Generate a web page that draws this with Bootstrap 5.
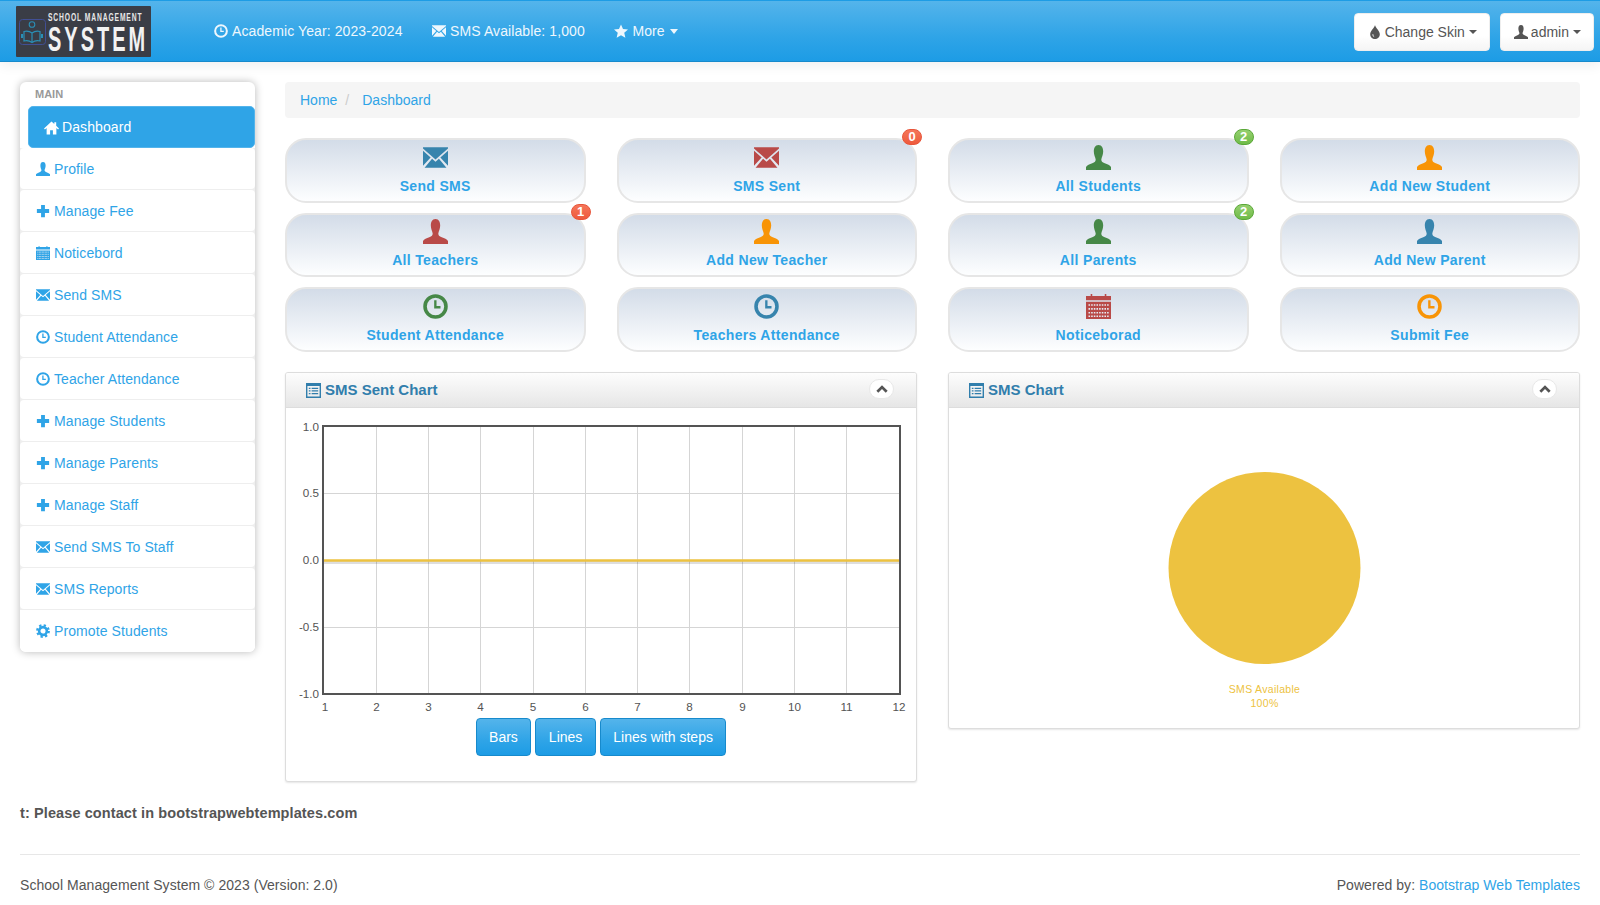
<!DOCTYPE html>
<html lang="en">
<head>
<meta charset="utf-8">
<title>School Management System</title>
<link href="https://cdn.jsdelivr.net/npm/bootstrap@5.3.0/dist/css/bootstrap.min.css" rel="stylesheet">
<style>
body{font-family:"Liberation Sans",Arial,sans-serif;font-size:14px;line-height:20px;letter-spacing:.1px;color:#555;background:#fff;height:905px;overflow:hidden}
a{text-decoration:none;color:#2fa4e7}
.ico{display:inline-block;width:14px;height:14px;fill:currentColor;vertical-align:-1px;flex:none}
.hdr{height:62px;padding:0 6px 0 16px;background:linear-gradient(#54b4eb,#2fa4e7 60%,#1d9ce5);border-top:1px solid #1d9ce5;border-bottom:1px solid #178acc;box-shadow:0 3px 12px rgba(0,0,0,.07)}
.hdr-logo{width:135px;height:51px;display:block;margin-top:1px}
.hdr-nav{margin-left:63px;gap:29.500px;color:#eef7fd}
.hdr-nav span.hdr-it{display:flex;align-items:center;gap:4px;white-space:nowrap}
.hdr-caret::after{margin-left:1px;vertical-align:2px;border-top-width:5px;border-left-width:4.500px;border-right-width:4.500px}
.hdr-btns{gap:10px;margin-top:2px}
.hdr-btn{height:38px;padding:0 12px 0 13px;font-size:14px;color:#555;background:linear-gradient(#fff,#fff 60%,#f5f5f5);border:1px solid #eee;border-radius:4px;display:flex;align-items:center;gap:3px}
.hdr-btn .ico{color:#555}
.hdr-btn::after{margin-left:1px;vertical-align:0}
.wrap{padding:20px 20px 0;gap:30px}
.side{width:235px;flex:none;background:#fff;border-radius:6px;box-shadow:0 0 8px rgba(0,0,0,.28);height:570px;overflow:hidden}
.side-cap{font-size:11px;font-weight:700;color:#999;height:24px;line-height:24px;padding-left:15px;letter-spacing:0}
.side-list{margin:0;padding:0;list-style:none}
.side-list li{height:42px;background:#eee}
.side-list a{display:flex;align-items:center;gap:4px;height:41px;padding:1px 15px 0 16px;background:#fff;border-radius:4px}
.side-list li.side-on{margin-left:8px;background:#fff}
.side-list li.side-on a{height:42px;background:#2fa4e7;color:#fff;padding:0 15px;gap:3px;border:1px solid #54b4eb;border-radius:5px}
.side-list li.side-on .ico{width:15px;height:15px}
.side-list li:last-child{background:#fff}
.main-col{flex:1;min-width:0}
.crumb{height:36px;margin:0 0 20px;padding:0 15px;background:#f5f5f5;border-radius:4px;align-items:center;letter-spacing:0}
.crumb .breadcrumb-item+.breadcrumb-item::before{color:#ccc;padding-right:13px}
.crumb .breadcrumb-item+.breadcrumb-item{padding-left:8px}
.crumb .breadcrumb-item.active{color:#2fa4e7}
.tiles{--bs-gutter-x:31px;--bs-gutter-y:10px}
.tile{position:relative;display:flex;flex-direction:column;align-items:center;height:64.700px;padding-top:4.500px;border:2px solid #e6e6e6;border-radius:21px;background:linear-gradient(#d3dce8,#fdfeff);font-weight:700;letter-spacing:.33px;color:#2fa4e7}
.tile .tile-ico{width:25px;height:25px;margin-bottom:6px;display:block;fill:currentColor}
.tile-blue{color:#3784ad}.tile-red{color:#b94a48}.tile-org{color:#f89406}.tile-grn{color:#468847}
.tile-lbl{color:#2fa4e7}
.pip{position:absolute;top:-11px;right:-7px;width:20px;height:16px;border-radius:8px;color:#fff;font-size:13px;line-height:14px;font-weight:700;text-align:center;letter-spacing:0}
.pip-red{background:linear-gradient(#f5765a,#ee5a3c);border:1px solid #e8553a}
.pip-grn{background:linear-gradient(#96d070,#6fbb48);border:1px solid #5aa838}
.panels{--bs-gutter-x:31px;margin-top:20px}
.pane{border:1px solid #ddd;border-radius:3px;box-shadow:0 1px 2px rgba(0,0,0,.1);overflow:hidden;background:#fff}
.pane-hd{height:35px;padding:0 22px 0 20px;background:linear-gradient(#fdfdfd,#e6e6e6);border-bottom:1px solid #ddd;color:#317eac;font-weight:700;font-size:15px;letter-spacing:0}
.pane-hd .ico{width:15px;height:15px;color:#317eac}
.pane-tl{display:flex;align-items:center;gap:4px}
.pane-up{width:25px;height:20px;border-radius:10px;background:#fff;border:1px solid #e8e8e8;display:flex;align-items:center;justify-content:center;margin-top:-2px}
.pane-hd .pane-up .ico{width:12px;height:12px;color:#555}
.pane-bd-l{height:373px}
.pane-bd-r{height:320px}
.chart{display:block}
.chart text{font-family:"Liberation Sans",Arial,sans-serif;font-size:11.670px;fill:#545454;letter-spacing:0}
.chart.pie-lbl text{fill:#edc240;font-size:10.500px;letter-spacing:.3px}
.chart-btn{height:38px;padding:0 12.500px;font-size:14px;color:#fff;background:linear-gradient(#54b4eb,#2fa4e7 60%,#1d9ce5);border:1px solid #178acc;border-radius:4px}
.notice{padding:0 20px;margin-top:21px;font-weight:700;font-size:14.500px;letter-spacing:.1px;color:#555;height:20px}
.foot-line{margin:31px 20px 0;border:0;border-top:1px solid #e7e7e7;opacity:1}
.foot{padding:20px 20px 0;letter-spacing:.05px}
</style>
</head>
<body>
<svg width="0" height="0" class="position-absolute" aria-hidden="true">
<defs>
<symbol id="i-home" viewBox="0 0 16 16"><path d="M8 1.500 0 9l1 1 1.800-1.400V15.500h3.700v-4.700h3v4.700h3.700V8.600L15 10l1-1-3-2.800V2.500h-2v1.800z"/></symbol>
<symbol id="i-user" viewBox="0 0 16 16"><path d="M8 0C5.800 0 5 2 5 4.200c0 2 1 3.800 1.200 5 .1 1-.6 1.800-2.200 2.500C2.300 12.400.7 13 0 14v2h16v-2c-.7-1-2.300-1.600-4-2.300-1.600-.7-2.300-1.500-2.200-2.500.2-1.200 1.200-3 1.200-5C11 2 10.200 0 8 0z"/></symbol>
<symbol id="i-plus" viewBox="0 0 16 16"><path d="M5.800 1h4.400v4.800H15v4.400h-4.800V15H5.800v-4.800H1V5.800h4.800z"/></symbol>
<symbol id="i-mail" viewBox="0 0 16 16"><path d="M0 1.500h16v.7L8 9.200 0 2.200zM0 3.700l4.900 4.300L0 13.300zM16 3.700l-4.900 4.300 4.900 5.300zM1 14.500l4.800-5.700L8 10.700l2.200-1.900 4.800 5.700z"/></symbol>
<symbol id="i-cal" viewBox="0 0 16 16"><path d="M3 0h1v1.200h8V0h1v1.200h3v2.800H0V1.200h3zM0 5h16v11H0z"/><g stroke="#e6ecf4" stroke-width="1" stroke-dasharray="1 .7" fill="none"><path d="M1.600 7h13M1.600 9.500h13M1.600 12h13M1.600 14.200h13"/></g></symbol>
<symbol id="i-time" viewBox="0 0 16 16"><circle cx="8" cy="8" r="6.700" fill="none" stroke="currentColor" stroke-width="2.300"/><path d="M7.900 4v4.500h3.300" fill="none" stroke="currentColor" stroke-width="1.500"/></symbol>
<symbol id="i-cog" viewBox="0 0 16 16"><circle cx="8" cy="8" r="4.400" fill="none" stroke="currentColor" stroke-width="3"/><circle cx="8" cy="8" r="6.600" fill="none" stroke="currentColor" stroke-width="2.600" stroke-dasharray="2.600 2.580"/></symbol>
<symbol id="i-star" viewBox="0 0 16 16"><path d="M8 .5l2.300 5.300 5.700.5-4.300 3.800 1.300 5.700L8 12.800l-5 3 1.300-5.700L0 6.300l5.700-.5z"/></symbol>
<symbol id="i-tint" viewBox="0 0 16 16"><path fill-rule="evenodd" d="M8 0c.3 3.200 5.500 6.500 5.500 10.600C13.500 13.800 11 16 8 16s-5.500-2.200-5.500-5.400C2.500 6.500 7.700 3.200 8 0zM5 10.500c0 1.800 1 3 2.500 3.400-1-.9-1.400-2-1.400-3.400z"/></symbol>
<symbol id="i-list" viewBox="0 0 16 16"><path fill-rule="evenodd" d="M0 0h16v16H0zM1.500 3.200v11.300h13V3.200z"/><path d="M3 5h1.800v1.300H3zM6 5h7v1.300H6zM3 7.800h1.800v1.300H3zM6 7.800h7v1.300H6zM3 10.600h1.800v1.300H3zM6 10.600h7v1.300H6z"/></symbol>
<symbol id="i-up" viewBox="0 0 16 16"><path d="M8 3l7.500 7.300L13 13 8 8 3 13 .5 10.300z"/></symbol>
</defs>
</svg>

<header class="hdr d-flex align-items-center">
  <svg class="hdr-logo" viewBox="0 0 135 51">
    <rect width="135" height="51" rx="1" fill="#3a3d46"/>
    <rect x="3.500" y="13.500" width="26" height="25" rx="3" fill="none" stroke="#414f94" stroke-width="1"/>
    <circle cx="16" cy="18.500" r="2.800" fill="none" stroke="#2a8fb5" stroke-width="1.100"/>
    <path d="M8 25.500c3-.8 6 0 8 1.500 2-1.500 5-2.300 8-1.500v9.500c-3-.8-6 0-8 1.500-2-1.500-5-2.300-8-1.500zM16 27v9" fill="none" stroke="#2a8fb5" stroke-width="1.200"/>
    <path d="M6 28v4M26 28v4" stroke="#2a8fb5" stroke-width="2"/>
    <text transform="translate(32 15.300) scale(.64 1)" font-family="Liberation Sans" font-weight="700" font-size="10.500" letter-spacing="1.400" fill="#e8e8e8">SCHOOL MANAGEMENT</text>
    <text transform="translate(32 45) scale(.555 1)" font-family="Liberation Sans" font-weight="700" font-size="36" letter-spacing="5.400" fill="#f2f2f2">SYSTEM</text>
  </svg>
  <nav class="hdr-nav d-flex align-items-center">
    <span class="hdr-it"><svg class="ico"><use href="#i-time"/></svg>Academic Year: 2023-2024</span>
    <span class="hdr-it"><svg class="ico"><use href="#i-mail"/></svg>SMS Available: 1,000</span>
    <span class="hdr-it dropdown-toggle hdr-caret"><svg class="ico"><use href="#i-star"/></svg>More</span>
  </nav>
  <div class="ms-auto d-flex hdr-btns">
    <button class="hdr-btn dropdown-toggle" type="button"><svg class="ico"><use href="#i-tint"/></svg>Change Skin</button>
    <button class="hdr-btn dropdown-toggle" type="button"><svg class="ico"><use href="#i-user"/></svg>admin</button>
  </div>
</header>

<div class="wrap d-flex align-items-start">
  <aside class="side">
    <div class="side-cap">MAIN</div>
    <ul class="side-list">
      <li class="side-on"><a href="#"><svg class="ico"><use href="#i-home"/></svg>Dashboard</a></li>
      <li><a href="#"><svg class="ico"><use href="#i-user"/></svg>Profile</a></li>
      <li><a href="#"><svg class="ico"><use href="#i-plus"/></svg>Manage Fee</a></li>
      <li><a href="#"><svg class="ico"><use href="#i-cal"/></svg>Noticebord</a></li>
      <li><a href="#"><svg class="ico"><use href="#i-mail"/></svg>Send SMS</a></li>
      <li><a href="#"><svg class="ico"><use href="#i-time"/></svg>Student Attendance</a></li>
      <li><a href="#"><svg class="ico"><use href="#i-time"/></svg>Teacher Attendance</a></li>
      <li><a href="#"><svg class="ico"><use href="#i-plus"/></svg>Manage Students</a></li>
      <li><a href="#"><svg class="ico"><use href="#i-plus"/></svg>Manage Parents</a></li>
      <li><a href="#"><svg class="ico"><use href="#i-plus"/></svg>Manage Staff</a></li>
      <li><a href="#"><svg class="ico"><use href="#i-mail"/></svg>Send SMS To Staff</a></li>
      <li><a href="#"><svg class="ico"><use href="#i-mail"/></svg>SMS Reports</a></li>
      <li><a href="#"><svg class="ico"><use href="#i-cog"/></svg>Promote Students</a></li>
    </ul>
  </aside>

  <main class="main-col">
    <ol class="breadcrumb crumb d-flex">
      <li class="breadcrumb-item"><a href="#">Home</a></li>
      <li class="breadcrumb-item active">Dashboard</li>
    </ol>

    <div class="row row-cols-4 tiles">
      <div class="col"><a class="tile" href="#"><svg class="tile-ico tile-blue"><use href="#i-mail"/></svg><span class="tile-lbl">Send SMS</span></a></div>
      <div class="col"><a class="tile" href="#"><svg class="tile-ico tile-red"><use href="#i-mail"/></svg><span class="tile-lbl">SMS Sent</span><span class="pip pip-red">0</span></a></div>
      <div class="col"><a class="tile" href="#"><svg class="tile-ico tile-grn"><use href="#i-user"/></svg><span class="tile-lbl">All Students</span><span class="pip pip-grn">2</span></a></div>
      <div class="col"><a class="tile" href="#"><svg class="tile-ico tile-org"><use href="#i-user"/></svg><span class="tile-lbl">Add New Student</span></a></div>
      <div class="col"><a class="tile" href="#"><svg class="tile-ico tile-red"><use href="#i-user"/></svg><span class="tile-lbl">All Teachers</span><span class="pip pip-red">1</span></a></div>
      <div class="col"><a class="tile" href="#"><svg class="tile-ico tile-org"><use href="#i-user"/></svg><span class="tile-lbl">Add New Teacher</span></a></div>
      <div class="col"><a class="tile" href="#"><svg class="tile-ico tile-grn"><use href="#i-user"/></svg><span class="tile-lbl">All Parents</span><span class="pip pip-grn">2</span></a></div>
      <div class="col"><a class="tile" href="#"><svg class="tile-ico tile-blue"><use href="#i-user"/></svg><span class="tile-lbl">Add New Parent</span></a></div>
      <div class="col"><a class="tile" href="#"><svg class="tile-ico tile-grn"><use href="#i-time"/></svg><span class="tile-lbl">Student Attendance</span></a></div>
      <div class="col"><a class="tile" href="#"><svg class="tile-ico tile-blue"><use href="#i-time"/></svg><span class="tile-lbl">Teachers Attendance</span></a></div>
      <div class="col"><a class="tile" href="#"><svg class="tile-ico tile-red"><use href="#i-cal"/></svg><span class="tile-lbl">Noticeborad</span></a></div>
      <div class="col"><a class="tile" href="#"><svg class="tile-ico tile-org"><use href="#i-time"/></svg><span class="tile-lbl">Submit Fee</span></a></div>
    </div>

    <div class="row row-cols-2 panels align-items-start">
      <div class="col">
        <div class="pane">
          <div class="pane-hd d-flex align-items-center justify-content-between">
            <span class="pane-tl"><svg class="ico"><use href="#i-list"/></svg>SMS Sent Chart</span>
            <span class="pane-up"><svg class="ico"><use href="#i-up"/></svg></span>
          </div>
          <div class="pane-bd-l">
            <svg class="chart" width="630" height="310" viewBox="286 408 630 310">
              <g stroke="#d5d5d5" stroke-width="1" fill="none">
                <path d="M376.500 426V694M428.500 426V694M480.500 426V694M533.500 426V694M585.500 426V694M637.500 426V694M689.500 426V694M742.500 426V694M794.500 426V694M846.500 426V694"/>
                <path d="M323 493.500H900M323 627.500H900"/>
              </g>
              <path d="M323 562.500H900" stroke="#000" stroke-opacity=".13" stroke-width="3"/>
              <path d="M323 560.500H900" stroke="#edc240" stroke-width="2.500"/>
              <rect x="323" y="426" width="577" height="268" fill="none" stroke="#545454" stroke-width="2"/>
              <g text-anchor="end">
                <text x="319" y="431">1.0</text><text x="319" y="497">0.5</text><text x="319" y="564">0.0</text><text x="319" y="631">-0.5</text><text x="319" y="698">-1.0</text>
              </g>
              <g text-anchor="middle">
                <text x="325" y="711">1</text><text x="376.500" y="711">2</text><text x="428.500" y="711">3</text><text x="480.500" y="711">4</text><text x="533" y="711">5</text><text x="585.500" y="711">6</text><text x="637.500" y="711">7</text><text x="689.500" y="711">8</text><text x="742.500" y="711">9</text><text x="794.500" y="711">10</text><text x="846.500" y="711">11</text><text x="899" y="711">12</text>
              </g>
            </svg>
            <div class="d-flex justify-content-center gap-1">
              <button class="chart-btn" type="button">Bars</button>
              <button class="chart-btn" type="button">Lines</button>
              <button class="chart-btn" type="button">Lines with steps</button>
            </div>
          </div>
        </div>
      </div>
      <div class="col">
        <div class="pane">
          <div class="pane-hd d-flex align-items-center justify-content-between">
            <span class="pane-tl"><svg class="ico"><use href="#i-list"/></svg>SMS Chart</span>
            <span class="pane-up"><svg class="ico"><use href="#i-up"/></svg></span>
          </div>
          <div class="pane-bd-r">
            <svg class="chart pie-lbl" width="630" height="320" viewBox="949 408 630 320">
              <circle cx="1264.500" cy="568" r="96" fill="#edc240"/>
              <text x="1264.500" y="693" text-anchor="middle">SMS Available</text>
              <text x="1264.500" y="707" text-anchor="middle">100%</text>
            </svg>
          </div>
        </div>
      </div>
    </div>
  </main>
</div>

<div class="notice">t: Please contact in bootstrapwebtemplates.com</div>
<hr class="foot-line">
<footer class="foot d-flex justify-content-between">
  <span>School Management System © 2023 (Version: 2.0)</span>
  <span>Powered by: <a href="#">Bootstrap Web Templates</a></span>
</footer>
<script src="https://cdn.jsdelivr.net/npm/bootstrap@5.3.0/dist/js/bootstrap.bundle.min.js"></script>
</body>
</html>
